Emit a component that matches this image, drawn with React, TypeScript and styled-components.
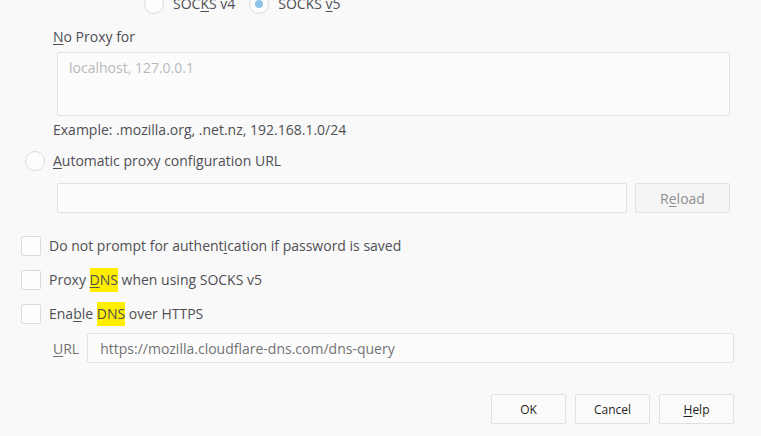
import React from "react";
import styled, { createGlobalStyle } from "styled-components";

const Global = createGlobalStyle`
  html, body { margin: 0; padding: 0; background: #f9f9fa; }
  body { font-family: "Open Sans", "Noto Sans", sans-serif; font-size: 14px; color: #4f4f54; overflow: hidden; }
`;

const Page = styled.div`
  width: 761px;
  height: 436px;
  display: flex;
  flex-direction: column;
  overflow: hidden;
`;

const SocksRow = styled.div`
  display: flex;
  align-items: center;
  gap: 9px;
  margin-top: -6px;
  padding-left: 144px;
  height: 20px;
`;

const RadioItem = styled.label`
  display: flex;
  align-items: center;
  gap: 9px;
  margin-right: 5px;
  line-height: 20px;
`;

const RadioCircle = styled.span<{ $checked?: boolean }>`
  width: 18px;
  height: 18px;
  border-radius: 50%;
  border: 1px solid #dcdcde;
  background: #fdfdfd;
  display: inline-flex;
  align-items: center;
  justify-content: center;
  flex: none;
  &::after {
    content: "";
    width: 8px;
    height: 8px;
    border-radius: 50%;
    background: ${(p) => (p.$checked ? "#8cc4ea" : "transparent")};
  }
`;

const Key = styled.span`
  text-decoration: underline;
  text-underline-offset: 2px;
`;

const Label = styled.div<{ $top: number }>`
  margin-top: ${(p) => p.$top}px;
  padding-left: 53px;
  line-height: 20px;
`;

const TextArea = styled.div`
  margin: 5px 0 0 57px;
  width: 671px;
  height: 62px;
  border: 1px solid #e1e1e3;
  border-radius: 2px;
  background: #fcfcfc;
`;

const Placeholder = styled.div`
  color: #b9b9bb;
  padding: 5px 11px;
  line-height: 20px;
`;

const AutoRow = styled.div`
  margin-top: 11px;
  padding-left: 25px;
  display: flex;
  align-items: center;
  gap: 8px;
  height: 20px;
  line-height: 20px;
`;

const InputRow = styled.div<{ $top: number; $left: number; $right: number }>`
  margin-top: ${(p) => p.$top}px;
  padding-left: ${(p) => p.$left}px;
  padding-right: ${(p) => p.$right}px;
  display: flex;
  align-items: center;
  gap: 8px;
  height: 30px;
`;

const TextInput = styled.div`
  flex: 1;
  height: 28px;
  border: 1px solid #e1e1e3;
  border-radius: 2px;
  background: #fcfcfc;
  display: flex;
  align-items: center;
  padding-left: 12px;
  color: #737373;
`;

const InlineLabel = styled.span`
  color: #737373;
`;

const Button = styled.div<{ $width: number; $dim?: boolean }>`
  width: ${(p) => p.$width}px;
  height: 28px;
  box-sizing: content-box;
  border: 1px solid #e1e1e3;
  border-radius: 2px;
  background: ${(p) => (p.$dim ? "#f5f5f6" : "#fbfbfb")};
  display: flex;
  align-items: center;
  justify-content: center;
  color: ${(p) => (p.$dim ? "#8f8f92" : "#1f1f22")};
  font-size: ${(p) => (p.$dim ? 14 : 12)}px;
  flex: none;
`;

const CheckRow = styled.div<{ $top: number }>`
  margin-top: ${(p) => p.$top}px;
  padding-left: 21px;
  display: flex;
  align-items: center;
  gap: 8px;
  height: 20px;
  line-height: 20px;
`;

const CheckBox = styled.span`
  width: 18px;
  height: 18px;
  border: 1px solid #dcdcde;
  border-radius: 2px;
  background: #fdfdfd;
  flex: none;
`;

const Mark = styled.span`
  background: #ffee00;
  padding: 2px 0 3px;
`;

const Footer = styled.div`
  margin-top: 31px;
  display: flex;
  justify-content: flex-end;
  gap: 9px;
  padding-right: 27px;
`;

export default function App() {
  return (
    <Page>
      <Global />
      <SocksRow>
        <RadioItem>
          <RadioCircle />
          <span>SOC<Key>K</Key>S v4</span>
        </RadioItem>
        <RadioItem>
          <RadioCircle $checked />
          <span>SOCKS <Key>v</Key>5</span>
        </RadioItem>
      </SocksRow>
      <Label $top={13}><Key>N</Key>o Proxy for</Label>
      <TextArea>
        <Placeholder>localhost, 127.0.0.1</Placeholder>
      </TextArea>
      <Label $top={4}>Example: .mozilla.org, .net.nz, 192.168.1.0/24</Label>
      <AutoRow>
        <RadioCircle />
        <span><Key>A</Key>utomatic proxy configuration URL</span>
      </AutoRow>
      <InputRow $top={12} $left={57} $right={31}>
        <TextInput />
        <Button $width={93} $dim>R<Key>e</Key>load</Button>
      </InputRow>
      <CheckRow $top={23}>
        <CheckBox />
        <span>Do not prompt for authent<Key>i</Key>cation if password is saved</span>
      </CheckRow>
      <CheckRow $top={14}>
        <CheckBox />
        <span>Proxy <Mark><Key>D</Key>NS</Mark> when using SOCKS v5</span>
      </CheckRow>
      <CheckRow $top={14}>
        <CheckBox />
        <span>Ena<Key>b</Key>le <Mark>DNS</Mark> over HTTPS</span>
      </CheckRow>
      <InputRow $top={9} $left={53} $right={27}>
        <InlineLabel><Key>U</Key>RL</InlineLabel>
        <TextInput>https://mozilla.cloudflare-dns.com/dns-query</TextInput>
      </InputRow>
      <Footer>
        <Button $width={73}>OK</Button>
        <Button $width={73}>Cancel</Button>
        <Button $width={73}><Key>H</Key>elp</Button>
      </Footer>
    </Page>
  );
}
